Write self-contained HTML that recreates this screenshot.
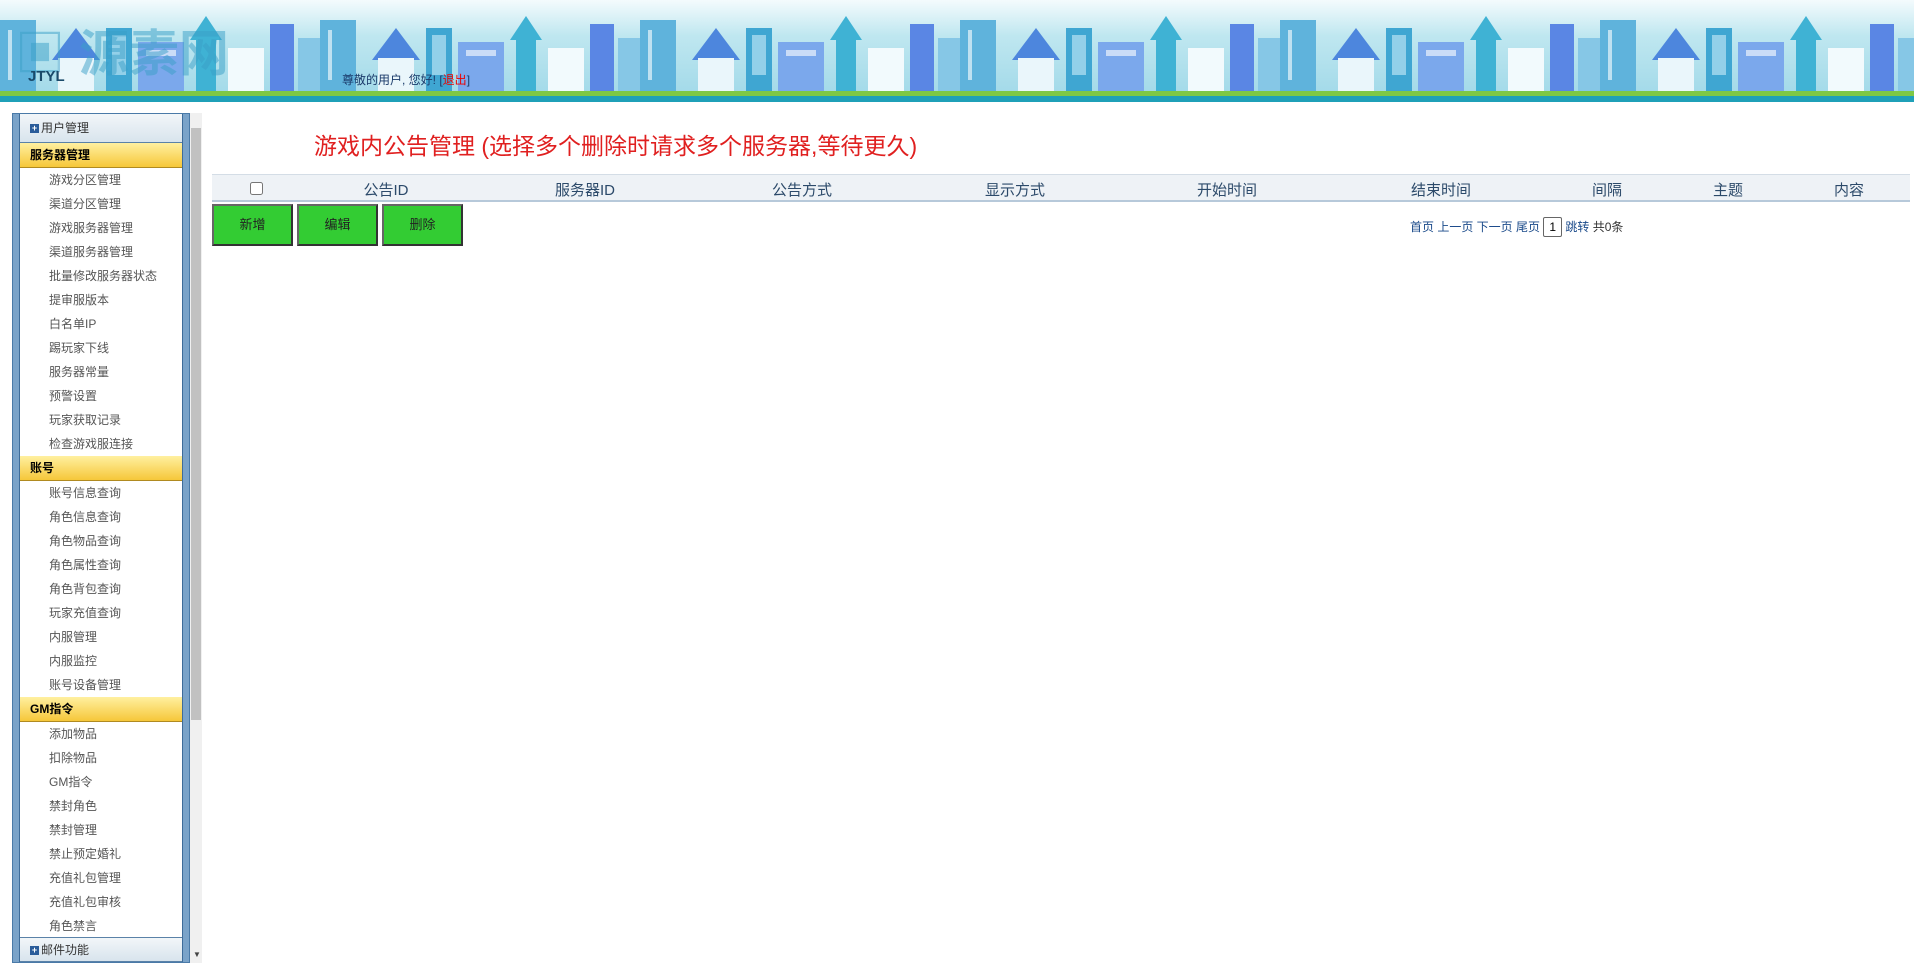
<!DOCTYPE html>
<html><head><meta charset="utf-8"><style>
*{margin:0;padding:0;box-sizing:border-box}
body{width:1914px;height:972px;overflow:hidden;background:#fff;font-family:"Liberation Sans","Noto Sans CJK SC",sans-serif;position:relative}
.hdr{position:absolute;left:0;top:0;width:1914px;height:102px;background:linear-gradient(#f4fbfd,#bfe7f0 35%,#9fd8e8);overflow:hidden}
.abs{position:absolute}
.side{position:absolute;left:12px;top:113px;width:178px;height:850px;background:#7aa3c9;border:1px solid #4a7aa8}
.inner{position:absolute;left:6px;top:0;width:164px;height:848px;background:#fff;border-left:1px solid #3e6c9a;border-right:1px solid #3e6c9a}
.grp{position:absolute;left:0;width:162px;height:25px;font-size:12px;color:#333;line-height:25px;padding-left:10px;background:linear-gradient(#f2f6f9,#d8e4ed);border-bottom:1px solid #5a82a8}
.grp.on{background:linear-gradient(#fff0a0,#f6c73a);font-weight:bold;color:#000;border-bottom:1px solid #b08a20}
.plus{display:inline-block;width:9px;height:9px;background:#2a5c9a;color:#fff;font-size:9px;line-height:9px;text-align:center;vertical-align:1px;margin-right:2px;font-weight:bold}
.it{position:absolute;left:29px;font-size:12px;color:#555;line-height:24px;height:24px}
.th{position:absolute;top:174px;left:212px;width:1698px;height:28px;background:#eef2f6;border-top:1px solid #d4dde6;border-bottom:2px solid #b7c9da}
.th span{position:absolute;top:4px;font-size:15px;color:#2c4a6a;transform:translateX(-50%)}
.btn{position:absolute;top:204px;width:81px;height:42px;background:#33cc33;border:2px solid #333;border-top-color:#666;border-left-color:#666;font-size:13px;color:#222;text-align:center;line-height:38px}
</style></head><body>
<div class="hdr">
<svg width="1914" height="102" style="position:absolute;left:0;top:0">
<defs><g id="b">
<rect x="0" y="20" width="36" height="75" fill="#5fb3dc"/><rect x="8" y="30" width="4" height="50" fill="#fff" opacity=".6"/>
<polygon points="52,60 76,28 100,60" fill="#4d86dd"/><rect x="58" y="58" width="36" height="37" fill="#eaf6fb"/>
<rect x="106" y="28" width="26" height="67" fill="#3fa6d2"/><rect x="112" y="35" width="14" height="40" fill="#b8e2f2" opacity=".7"/>
<rect x="138" y="42" width="46" height="53" fill="#7ba8ec"/><rect x="146" y="50" width="30" height="6" fill="#fff" opacity=".6"/>
<polygon points="190,40 206,16 222,40" fill="#3fb2d4"/><rect x="196" y="38" width="20" height="57" fill="#3fb2d4"/>
<rect x="228" y="48" width="36" height="47" fill="#f2fafd"/><rect x="270" y="24" width="24" height="71" fill="#5a86e4"/>
<rect x="298" y="38" width="22" height="57" fill="#86c7e6"/>
</g></defs>
<use href="#b" x="0"/><use href="#b" x="320"/><use href="#b" x="640"/><use href="#b" x="960"/><use href="#b" x="1280"/><use href="#b" x="1600"/>
<rect x="0" y="91" width="1914" height="5" fill="#7ec845"/><rect x="0" y="96" width="1914" height="6" fill="#1fa0b8"/>
</svg>
<div class="abs" style="left:15px;top:14px;font-size:50px;color:#3aa0c8;opacity:.5;font-weight:bold">▣ 源素网</div>
<div class="abs" style="left:28px;top:68px;font-size:15px;font-weight:bold;color:#1a4a6a">JTYL</div>
<div class="abs" style="left:342px;top:71px;font-size:12px;color:#1a3a6a">尊敬的用户, 您好! [<span style="color:#e00">退出</span>]</div>
</div>
<div class="side"><div class="inner">
<div class="grp" style="top:0;height:29px;line-height:29px"><span class="plus">+</span>用户管理</div>
<div class="grp on" style="top:29px">服务器管理</div>
<div class="it" style="top:54px">游戏分区管理</div><div class="it" style="top:78px">渠道分区管理</div><div class="it" style="top:102px">游戏服务器管理</div><div class="it" style="top:126px">渠道服务器管理</div><div class="it" style="top:150px">批量修改服务器状态</div><div class="it" style="top:174px">提审服版本</div><div class="it" style="top:198px">白名单IP</div><div class="it" style="top:222px">踢玩家下线</div><div class="it" style="top:246px">服务器常量</div><div class="it" style="top:270px">预警设置</div><div class="it" style="top:294px">玩家获取记录</div><div class="it" style="top:318px">检查游戏服连接</div>
<div class="grp on" style="top:342px">账号</div>
<div class="it" style="top:367px">账号信息查询</div><div class="it" style="top:391px">角色信息查询</div><div class="it" style="top:415px">角色物品查询</div><div class="it" style="top:439px">角色属性查询</div><div class="it" style="top:463px">角色背包查询</div><div class="it" style="top:487px">玩家充值查询</div><div class="it" style="top:511px">内服管理</div><div class="it" style="top:535px">内服监控</div><div class="it" style="top:559px">账号设备管理</div>
<div class="grp on" style="top:583px">GM指令</div>
<div class="it" style="top:608px">添加物品</div><div class="it" style="top:632px">扣除物品</div><div class="it" style="top:656px">GM指令</div><div class="it" style="top:680px">禁封角色</div><div class="it" style="top:704px">禁封管理</div><div class="it" style="top:728px">禁止预定婚礼</div><div class="it" style="top:752px">充值礼包管理</div><div class="it" style="top:776px">充值礼包审核</div><div class="it" style="top:800px">角色禁言</div>
<div class="grp" style="top:823px;border-top:1px solid #5a82a8"><span class="plus">+</span>邮件功能</div>
</div></div>
<div class="abs" style="left:190px;top:113px;width:12px;height:850px;background:#f0f0f0"></div>
<div class="abs" style="left:191px;top:128px;width:10px;height:592px;background:#c1c1c1"></div>
<div class="abs" style="left:193px;top:950px;font-size:8px;color:#444">▼</div>
<div class="abs" style="left:314px;top:127px;font-size:23px;color:#e02020">游戏内公告管理 (选择多个删除时请求多个服务器,等待更久)</div>
<div class="th">
<input type="checkbox" style="position:absolute;left:38px;top:7px;width:13px;height:13px">
<span style="left:174px">公告ID</span><span style="left:373px">服务器ID</span><span style="left:590px">公告方式</span><span style="left:803px">显示方式</span><span style="left:1015px">开始时间</span><span style="left:1229px">结束时间</span><span style="left:1395px">间隔</span><span style="left:1516px">主题</span><span style="left:1637px">内容</span>
</div>
<div class="btn" style="left:212px">新增</div><div class="btn" style="left:297px">编辑</div><div class="btn" style="left:382px">删除</div>
<div class="abs" style="left:1410px;top:217px;font-size:12px;color:#1a4a8a">首页 上一页 下一页 尾页 <span style="display:inline-block;border:1px solid #666;border-radius:2px;padding:0 5px;color:#000;line-height:18px">1</span> 跳转 <span style="color:#333">共0条</span></div>
</body></html>
